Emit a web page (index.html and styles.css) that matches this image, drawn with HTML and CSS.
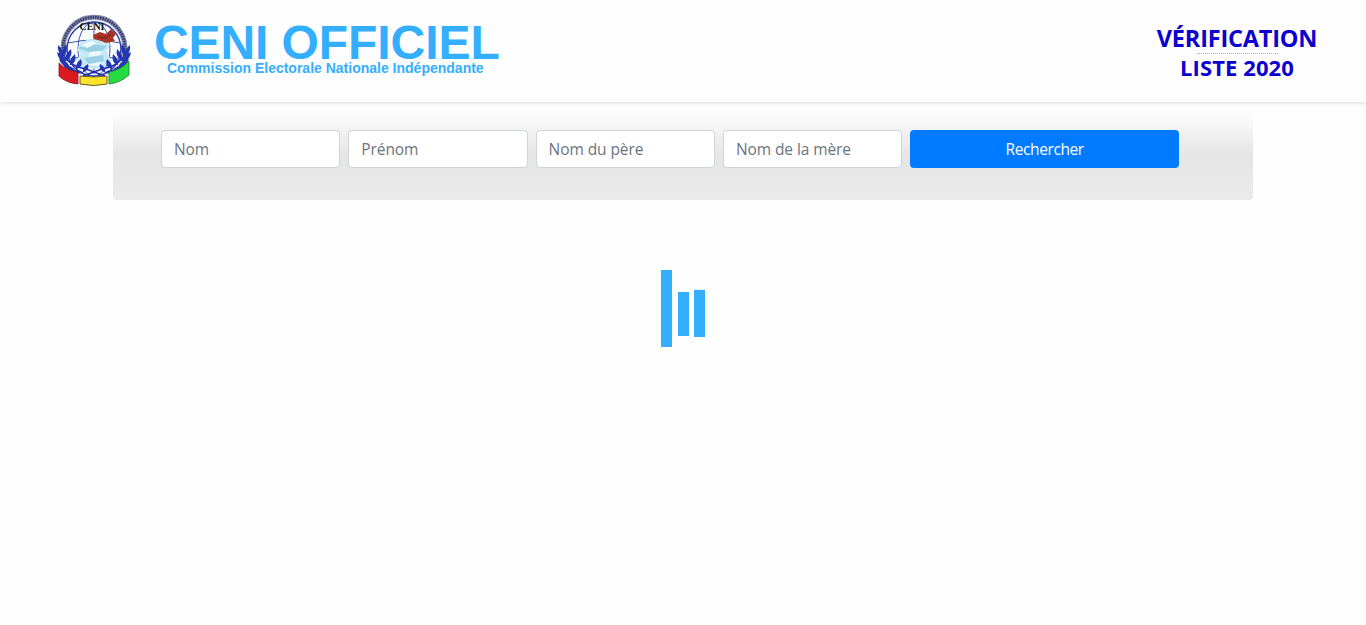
FILE: index.html
```html
<!DOCTYPE html>
<html lang="fr">
<head>
<meta charset="utf-8">
<title>CENI Officiel</title>
<link rel="stylesheet" href="styles.css">
</head>
<body>
<header class="header">
  <div class="brand">
    <svg class="emblem" width="74" height="74" viewBox="0 0 74 74" role="img" aria-label="CENI">
      <path d="M7 42 A31 31 0 1 1 67 42" fill="#fff" stroke="#8c91b4" stroke-width="5"/>
      <path d="M7 42 A31 31 0 1 1 67 42" fill="none" stroke="#343b68" stroke-width="3" stroke-dasharray="1.600 .9"/>
      <circle cx="37" cy="35" r="27" fill="#f8fcff" stroke="#2738a0" stroke-width="1.400"/>
      <g fill="none" stroke="#4053b0" stroke-width="1">
        <ellipse cx="37" cy="35" rx="16" ry="27"/>
        <path d="M11 29Q37 23 63 29M13 45Q37 39 61 45M37 8V60"/>
      </g>
      <path d="M23 29L32 25 47 26 53 30 50 37 54 47 45 55 25 54 19 46 24 40 20 36Z" fill="#c5e9f5"/>
      <path d="M20 34L35 30 50 32 45 37 31 38ZM27 44L46 41 47 47 32 50Z" fill="#98d1e5"/>
      <path d="M24 31L34 27 40 29 30 34ZM33 38L45 37 43 41 31 43ZM28 51L44 48 42 52Z" fill="#edf9fd"/>
      <text class="emblem-text" x="35" y="16" text-anchor="middle">CENI</text>
      <path d="M36 21L43 18 49 20 54 15 59 20 56 24 58 27 49 29 44 27 37 25Z" fill="#aa3428"/>
      <path d="M40 23L49 24 54 20" stroke="#6e2421" fill="none"/>
      <g fill="none" stroke="#1c2eae" stroke-width="1.600">
        <path d="M4 36Q10 52 29 55L48 62M70 36Q64 52 45 55L26 62"/>
      </g>
      <g fill="#2436b2">
        <path d="M5 42Q0 38 1 31Q7 36 6 42ZM8 48Q1 46 0 38Q8 41 9 48ZM12 53Q4 52 2 45Q11 47 13 53ZM18 57Q10 58 6 51Q15 51 19 57ZM26 59Q18 61 13 56Q21 54 27 59Z"/>
        <path d="M6 42Q12 37 9 30Q5 35 6 42ZM9 47Q16 43 14 35Q8 40 8 47ZM14 51Q20 48 18 40Q12 45 13 51ZM20 55Q27 52 24 45Q18 50 19 55ZM27 58Q33 55 31 50Q25 53 26 58Z"/>
        <path d="M69 42Q74 38 73 31Q67 36 68 42ZM66 48Q73 46 74 38Q66 41 65 48ZM62 53Q70 52 72 45Q63 47 61 53ZM56 57Q64 58 68 51Q59 51 55 57ZM48 59Q56 61 61 56Q53 54 47 59Z"/>
        <path d="M68 42Q62 37 65 30Q69 35 68 42ZM65 47Q58 43 60 35Q66 40 66 47ZM60 51Q54 48 56 40Q62 45 61 51ZM54 55Q47 52 50 45Q56 50 55 55ZM47 58Q41 55 43 50Q49 53 48 58Z"/>
      </g>
      <path d="M2 49Q10 57 21 58L21 70Q9 69 2 62Z" fill="#dc1821" stroke="#762421" stroke-width=".8"/>
      <path d="M23 62Q37 64 50 62L50 70Q37 73 23 70Z" fill="#ffe32b" stroke="#665a20" stroke-width="1"/>
      <path d="M52 58Q64 56 72 47L72 61Q63 69 52 70Z" fill="#24dc3e" stroke="#287336" stroke-width=".8"/>
    </svg>
    <div class="brand-name">
      <div class="brand-title">CENI OFFICIEL</div>
      <div class="brand-subtitle">Commission Electorale Nationale Indépendante</div>
    </div>
  </div>
  <div class="notice">
    <div class="notice-title">VÉRIFICATION</div>
    <div class="notice-line"></div>
    <div class="notice-list">LISTE 2020</div>
  </div>
</header>
<main class="container">
  <form class="search">
    <input class="field" type="text" placeholder="Nom">
    <input class="field" type="text" placeholder="Prénom">
    <input class="field" type="text" placeholder="Nom du père">
    <input class="field" type="text" placeholder="Nom de la mère">
    <button class="submit" type="button">Rechercher</button>
  </form>
  <div class="loader">
    <span class="bar bar-tall"></span>
    <span class="bar bar-short"></span>
    <span class="bar bar-mid"></span>
  </div>
</main>
</body>
</html>
```
FILE: styles.css
```css
* { box-sizing: border-box; }
body {
  margin: 0;
  background: #fefefe;
  font-family: "Open Sans", sans-serif;
  overflow: hidden;
}
.header {
  position: relative;
  z-index: 1;
  display: flex;
  justify-content: space-between;
  height: 102px;
  padding: 14px 48px 0 57px;
  background: #fefefe;
  box-shadow: 0 0 5px rgba(0, 0, 0, .2);
}
.brand { display: flex; gap: 23px; }
.emblem { display: block; }
.emblem-text { font: bold 10px "Liberation Serif", serif; fill: #111; }
.brand-name {
  width: 346px;
  padding-top: 11px;
  color: #34aeff;
  font-family: "Liberation Sans", sans-serif;
  font-weight: bold;
  white-space: nowrap;
}
.brand-title { font-size: 48px; line-height: 36px; letter-spacing: -.08px; }
.brand-subtitle { padding-left: 13px; font-size: 14px; line-height: 14px; }
.notice {
  width: 162px;
  padding-top: 9px;
  color: #0c00d0;
  font-weight: 700;
  text-align: center;
  white-space: nowrap;
}
.notice-title { font-size: 23.500px; line-height: 30px; letter-spacing: -.2px; }
.notice-line { width: 81px; margin: 0 auto; border-top: 1px dotted #aaa; }
.notice-list { font-size: 22px; line-height: 27px; letter-spacing: .1px; }
.container { width: 1140px; margin: 0 auto; }
.search {
  display: grid;
  grid-template-columns: repeat(4, 179.300px) 269px;
  column-gap: 8px;
  align-items: start;
  height: 98px;
  padding: 28px 48px 0;
  border-radius: 4px;
  background: linear-gradient(#fefefe 8%, #e6e6e6 53%, #eaeaea);
}
.field {
  width: 100%;
  height: 38px;
  padding: 6px 12px;
  border: 1px solid #ced4da;
  border-radius: 4px;
  background: #fff;
  font: 15.500px "Open Sans", sans-serif;
  letter-spacing: -.08px;
}
.field::placeholder { color: #6c757d; opacity: 1; }
.submit {
  height: 38px;
  padding: 0;
  border: 0;
  border-radius: 4px;
  background: #007bff;
  color: #fff;
  font: 15.500px "Open Sans", sans-serif;
  letter-spacing: -.4px;
}
.loader {
  display: flex;
  justify-content: center;
  align-items: flex-start;
  padding-top: 70px;
}
.bar { width: 11px; background: #34aeff; }
.bar-tall { height: 77px; }
.bar-short { height: 44px; margin: 22px 5px 0 6px; }
.bar-mid { height: 48px; margin-top: 19px; border-top: 1px solid #e4f4ff; }
```
